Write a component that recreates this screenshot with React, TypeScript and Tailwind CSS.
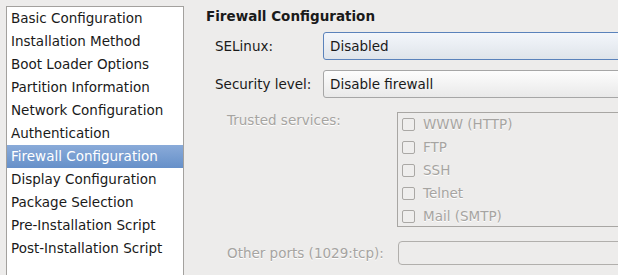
const SECTIONS = [
  "Basic Configuration",
  "Installation Method",
  "Boot Loader Options",
  "Partition Information",
  "Network Configuration",
  "Authentication",
  "Firewall Configuration",
  "Display Configuration",
  "Package Selection",
  "Pre-Installation Script",
  "Post-Installation Script",
];

const SERVICES = ["WWW (HTTP)", "FTP", "SSH", "Telnet", "Mail (SMTP)"];

const ACTIVE = "Firewall Configuration";

function SectionList() {
  return (
    <div className="ml-[6px] mt-[6px] w-[178px] h-[300px] shrink-0 border border-[#a3a19e] bg-white">
      {SECTIONS.map((name) => (
        <div
          key={name}
          className={
            name === ACTIVE
              ? "h-[23px] leading-[23px] pl-[4px] text-white bg-gradient-to-b from-[#8aabd9] to-[#6690c9]"
              : "h-[23px] leading-[23px] pl-[4px] text-[#1a1a1a]"
          }
        >
          {name}
        </div>
      ))}
    </div>
  );
}

export default function App() {
  return (
    <div className="w-[618px] h-[275px] overflow-hidden flex bg-[#edeceb] text-[13.5px] font-['DejaVu_Sans',sans-serif]">
      <SectionList />

      <div className="ml-[22px] flex flex-col">
        <h1 className="pt-[7px] leading-[18px] font-bold text-[#1a1a1a]">Firewall Configuration</h1>

        {/* SELinux */}
        <div className="mt-[7px] flex items-center">
          <span className="w-[117px] pl-[9px] text-[#1a1a1a]">SELinux:</span>
          <div className="w-[320px] h-[28px] pl-[6px] flex items-center rounded-[3px] border border-[#5a82bb] bg-gradient-to-b from-[#f3f6fb] to-[#dfe4ea] text-[#1a1a1a]">
            Disabled
          </div>
        </div>

        {/* Security level */}
        <div className="mt-[10px] flex items-center">
          <span className="w-[117px] pl-[9px] text-[#1a1a1a]">Security level:</span>
          <div className="w-[320px] h-[28px] pl-[6px] flex items-center rounded-[3px] border border-[#a6a6a6] bg-gradient-to-b from-[#fdfdfd] to-[#e9e9e9] text-[#1a1a1a]">
            Disable firewall
          </div>
        </div>

        {/* Trusted services */}
        <div className="mt-[14px] flex">
          <span className="w-[191px] pl-[21px] leading-[16px] text-[#a6a4a1] [text-shadow:0_1px_0_#fff]">
            Trusted services:
          </span>
          <div className="w-[240px] h-[115px] overflow-hidden border border-[#a8a6a3]">
            {SERVICES.map((s) => (
              <div key={s} className="h-[23px] flex items-center pl-[4px]">
                <span className="w-[13px] h-[13px] rounded-[2px] border border-[#aaa8a5] bg-[#efeeed]" />
                <span className="ml-[8px] text-[#a6a4a1] [text-shadow:0_1px_0_#fff]">{s}</span>
              </div>
            ))}
          </div>
        </div>

        {/* Other ports */}
        <div className="mt-[14px] flex items-center">
          <span className="w-[192px] pl-[21px] text-[#a6a4a1] [text-shadow:0_1px_0_#fff]">
            Other ports (1029:tcp):
          </span>
          <div className="w-[240px] h-[24px] rounded-[4px] border border-[#b1afac] bg-[#edeceb]" />
        </div>
      </div>
    </div>
  );
}
